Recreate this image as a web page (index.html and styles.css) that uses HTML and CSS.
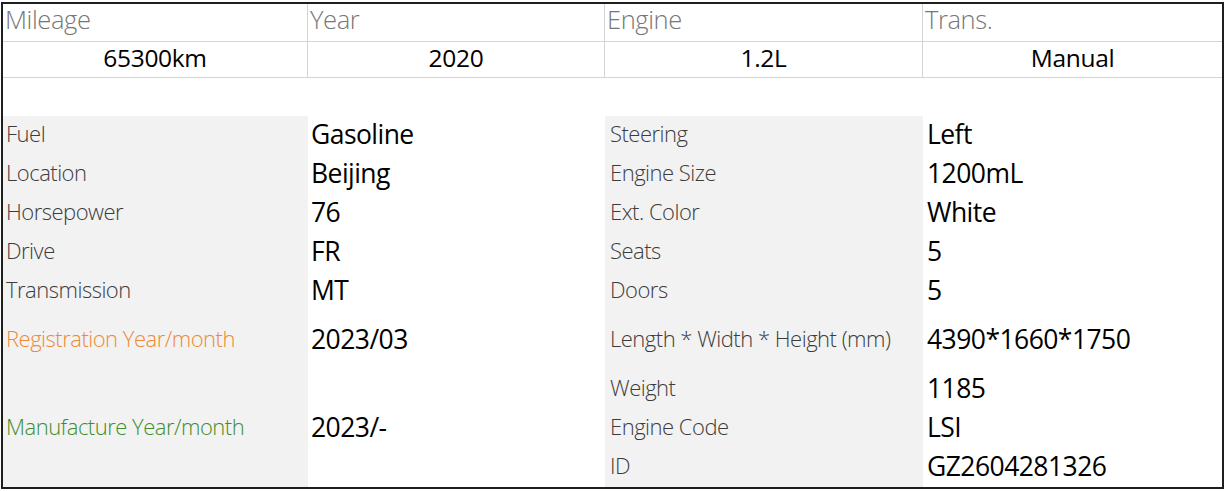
FILE: index.html
```html
<!DOCTYPE html>
<html lang="en">
<head>
<meta charset="utf-8">
<title>Vehicle specs</title>
<link rel="stylesheet" href="styles.css">
</head>
<body>
<div class="sheet">
  <div class="summary">
    <div class="hcell">Mileage</div>
    <div class="hcell">Year</div>
    <div class="hcell">Engine</div>
    <div class="hcell last">Trans.</div>
    <div class="vcell">65300km</div>
    <div class="vcell">2020</div>
    <div class="vcell">1.2L</div>
    <div class="vcell last">Manual</div>
  </div>
  <div class="spacer"></div>
  <div class="specs">
    <div class="lab c1 r1">Fuel</div>
    <div class="val c2 r1">Gasoline</div>
    <div class="lab c3 r1">Steering</div>
    <div class="val c4 r1">Left</div>

    <div class="lab c1 r2">Location</div>
    <div class="val c2 r2">Beijing</div>
    <div class="lab c3 r2">Engine Size</div>
    <div class="val c4 r2">1200mL</div>

    <div class="lab c1 r3">Horsepower</div>
    <div class="val c2 r3">76</div>
    <div class="lab c3 r3">Ext. Color</div>
    <div class="val c4 r3">White</div>

    <div class="lab c1 r4">Drive</div>
    <div class="val c2 r4">FR</div>
    <div class="lab c3 r4">Seats</div>
    <div class="val c4 r4">5</div>

    <div class="lab c1 r5">Transmission</div>
    <div class="val c2 r5">MT</div>
    <div class="lab c3 r5">Doors</div>
    <div class="val c4 r5">5</div>

    <div class="lab c1 r6 orange">Registration Year/month</div>
    <div class="val c2 r6">2023/03</div>
    <div class="lab c3 r6">Length * Width * Height (mm)</div>
    <div class="val c4 r6">4390*1660*1750</div>

    <div class="lab c1 r7 span3 green">Manufacture Year/month</div>
    <div class="val c2 r7 span3">2023/-</div>
    <div class="lab c3 r7">Weight</div>
    <div class="val c4 r7">1185</div>

    <div class="lab c3 r8">Engine Code</div>
    <div class="val c4 r8">LSI</div>

    <div class="lab c3 r9">ID</div>
    <div class="val c4 r9">GZ2604281326</div>
  </div>
</div>
</body>
</html>
```

FILE: styles.css
```css
* { box-sizing: border-box; }
html, body { margin: 0; padding: 0; background: #fff; }
body { font-family: "Open Sans", "Noto Sans", sans-serif; color: #000; }

.sheet {
  margin: 2px 0 0 1px;
  width: 1223px;
  height: 487px;
  border: 2px solid #1e1e1e;
  display: flex;
  flex-direction: column;
}

.summary {
  display: grid;
  grid-template-columns: 305px 297px 318px 299px;
  grid-template-rows: 38px 36px;
}
.hcell, .vcell {
  border-right: 1px solid #d4d4d4;
  border-bottom: 1px solid #d4d4d4;
  display: flex;
  align-items: center;
  white-space: nowrap;
}
.hcell.last, .vcell.last { border-right: none; }
.hcell {
  padding: 0 0 7px 2px;
  font-size: 25.5px;
  font-weight: 300;
  color: #777;
  letter-spacing: -0.4px;
}
.vcell {
  justify-content: center;
  padding-bottom: 4px;
  font-size: 24.5px;
  color: #000;
  letter-spacing: -0.3px;
}

.spacer { height: 38px; }

.specs {
  flex: 1;
  display: grid;
  grid-template-columns: 305px 297px 318px 299px;
  grid-template-rows: repeat(5, 39px) 59px repeat(3, 39px);
}
.lab, .val {
  display: flex;
  align-items: center;
  white-space: nowrap;
}
.lab {
  background: #f2f2f2;
  font-size: 22px;
  font-weight: 300;
  color: #3c3c3c;
  padding: 0 0 5px 3px;
  letter-spacing: -0.5px;
}
.c3 { padding-left: 5px; }
.val {
  font-size: 26.5px;
  color: #000;
  padding: 0 0 4px 3px;
  letter-spacing: -0.55px;
}
.c4 { padding-left: 4px; }

.c1 { grid-column: 1; }
.c2 { grid-column: 2; }
.c3 { grid-column: 3; }
.c4 { grid-column: 4; }
.r1 { grid-row: 1; }
.r2 { grid-row: 2; }
.r3 { grid-row: 3; }
.r4 { grid-row: 4; }
.r5 { grid-row: 5; }
.r6 { grid-row: 6; }
.r7 { grid-row: 7; }
.r8 { grid-row: 8; }
.r9 { grid-row: 9; }
.span3 { grid-row: 7 / span 3; }

.orange { color: #ed8a35; }
.green { color: #3f8f2c; }
```
